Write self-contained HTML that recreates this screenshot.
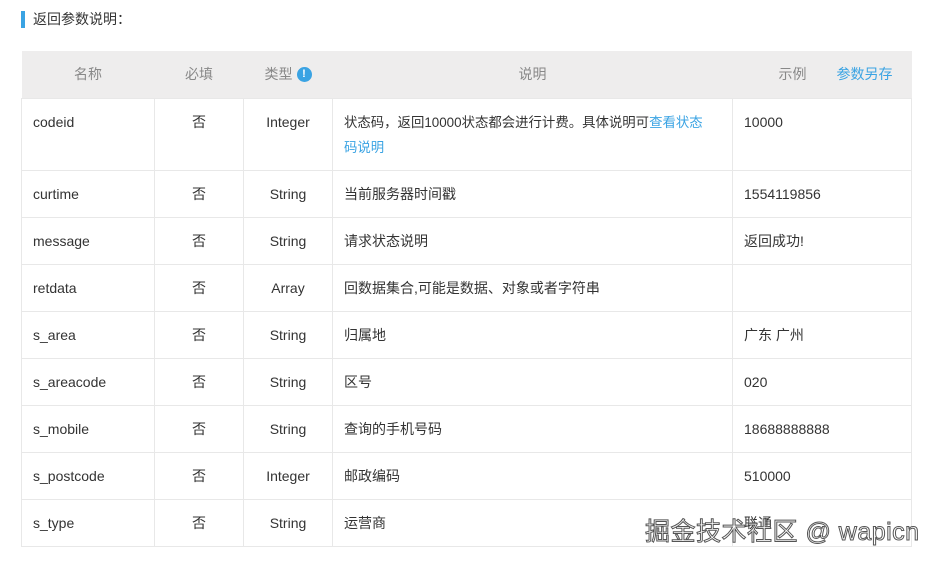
<!DOCTYPE html>
<html><head><meta charset="utf-8"><style>
*{margin:0;padding:0;box-sizing:border-box}
body{width:936px;height:563px;background:#fff;font-family:"Liberation Sans","Noto Sans CJK SC",sans-serif;font-size:14px;color:#333;position:relative;overflow:hidden}
.title{position:absolute;left:21px;top:11px;height:17px;border-left:4px solid #3aa3e3;padding-left:8px;font-size:14px;line-height:17px;color:#333}
table{position:absolute;left:21px;top:51px;width:890px;border-collapse:collapse;table-layout:fixed}
th{background:#eeeded;height:47px;font-weight:normal;color:#888;font-size:14px;border:none}
td{border:1px solid #e8e8e8;height:47px;vertical-align:top;line-height:25px;padding-top:11px}
td.l{padding-left:11px}
td.c{text-align:center}
a{color:#3aa3e3;text-decoration:none}
.ic{display:inline-block;width:15px;height:15px;border-radius:50%;background:#3aa3e3;color:#fff;font-size:11px;line-height:15px;text-align:center;font-weight:bold;vertical-align:2px;margin-left:4px}
.wm{position:absolute;left:645px;top:512px;font-size:25px;color:#fff;-webkit-text-stroke:1px #555;letter-spacing:0.5px;white-space:nowrap}
</style></head><body>
<div class="title">返回参数说明：</div>
<table>
<colgroup><col style="width:133px"><col style="width:89px"><col style="width:89px"><col style="width:400px"><col style="width:179px"></colgroup>
<tr><th>名称</th><th>必填</th><th>类型<span class="ic">!</span></th><th>说明</th><th style="text-align:left;padding-left:46px">示例<a style="margin-left:30px">参数另存</a></th></tr>
<tr><td class="l" style="height:72px">codeid</td><td class="c">否</td><td class="c">Integer</td><td class="l" style="font-size:13.4px;padding-right:24px">状态码，返回10000状态都会进行计费。具体说明可<a>查看状态码说明</a></td><td class="l">10000</td></tr>
<tr><td class="l">curtime</td><td class="c">否</td><td class="c">String</td><td class="l">当前服务器时间戳</td><td class="l">1554119856</td></tr>
<tr><td class="l">message</td><td class="c">否</td><td class="c">String</td><td class="l">请求状态说明</td><td class="l">返回成功!</td></tr>
<tr><td class="l">retdata</td><td class="c">否</td><td class="c">Array</td><td class="l">回数据集合,可能是数据、对象或者字符串</td><td class="l"></td></tr>
<tr><td class="l">s_area</td><td class="c">否</td><td class="c">String</td><td class="l">归属地</td><td class="l">广东 广州</td></tr>
<tr><td class="l">s_areacode</td><td class="c">否</td><td class="c">String</td><td class="l">区号</td><td class="l">020</td></tr>
<tr><td class="l">s_mobile</td><td class="c">否</td><td class="c">String</td><td class="l">查询的手机号码</td><td class="l">18688888888</td></tr>
<tr><td class="l">s_postcode</td><td class="c">否</td><td class="c">Integer</td><td class="l">邮政编码</td><td class="l">510000</td></tr>
<tr><td class="l">s_type</td><td class="c">否</td><td class="c">String</td><td class="l">运营商</td><td class="l">联通</td></tr>
</table>
<div class="wm">掘金技术社区 @ wapicn</div>
</body></html>
